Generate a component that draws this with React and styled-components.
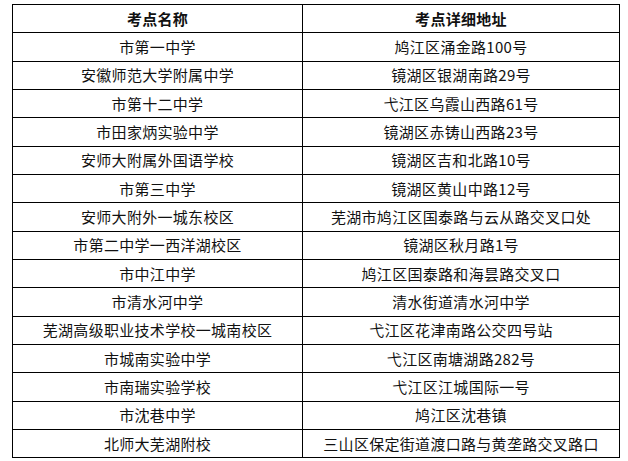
import React from "react";
import styled, { createGlobalStyle } from "styled-components";

const Global = createGlobalStyle`
  html, body { margin: 0; padding: 0; background: #fff; }
  body { font-family: "Noto Sans CJK SC", "Liberation Sans", sans-serif; }
`;

const Page = styled.div`
  padding: 4px 0 0 12px;
`;

const Table = styled.table`
  border-collapse: collapse;
  table-layout: fixed;
  width: 607px;
  border: 1px solid #000;
`;

const Row = styled.tr`
  height: 28.33px;
`;

const Cell = styled.td`
  border: 1px solid #000;
  padding: 0;
  text-align: center;
  vertical-align: middle;
  font-size: 15px;
  line-height: 18px;
  letter-spacing: 0.3px;
  color: #111;
  font-weight: ${(p) => (p.$head ? 700 : 400)};
  white-space: nowrap;
`;

const rows = [
  ["市第一中学", "鸠江区涌金路100号"],
  ["安徽师范大学附属中学", "镜湖区银湖南路29号"],
  ["市第十二中学", "弋江区乌霞山西路61号"],
  ["市田家炳实验中学", "镜湖区赤铸山西路23号"],
  ["安师大附属外国语学校", "镜湖区吉和北路10号"],
  ["市第三中学", "镜湖区黄山中路12号"],
  ["安师大附外一城东校区", "芜湖市鸠江区国泰路与云从路交叉口处"],
  ["市第二中学一西洋湖校区", "镜湖区秋月路1号"],
  ["市中江中学", "鸠江区国泰路和海昙路交叉口"],
  ["市清水河中学", "清水街道清水河中学"],
  ["芜湖高级职业技术学校一城南校区", "弋江区花津南路公交四号站"],
  ["市城南实验中学", "弋江区南塘湖路282号"],
  ["市南瑞实验学校", "弋江区江城国际一号"],
  ["市沈巷中学", "鸠江区沈巷镇"],
  ["北师大芜湖附校", "三山区保定街道渡口路与黄垄路交叉路口"],
];

export default function App() {
  return (
    <>
      <Global />
      <Page>
        <Table>
          <colgroup>
            <col style={{ width: 290 }} />
            <col style={{ width: 317 }} />
          </colgroup>
          <tbody>
            <Row>
              <Cell $head>考点名称</Cell>
              <Cell $head>考点详细地址</Cell>
            </Row>
            {rows.map(([a, b]) => (
              <Row key={a}>
                <Cell>{a}</Cell>
                <Cell>{b}</Cell>
              </Row>
            ))}
          </tbody>
        </Table>
      </Page>
    </>
  );
}
